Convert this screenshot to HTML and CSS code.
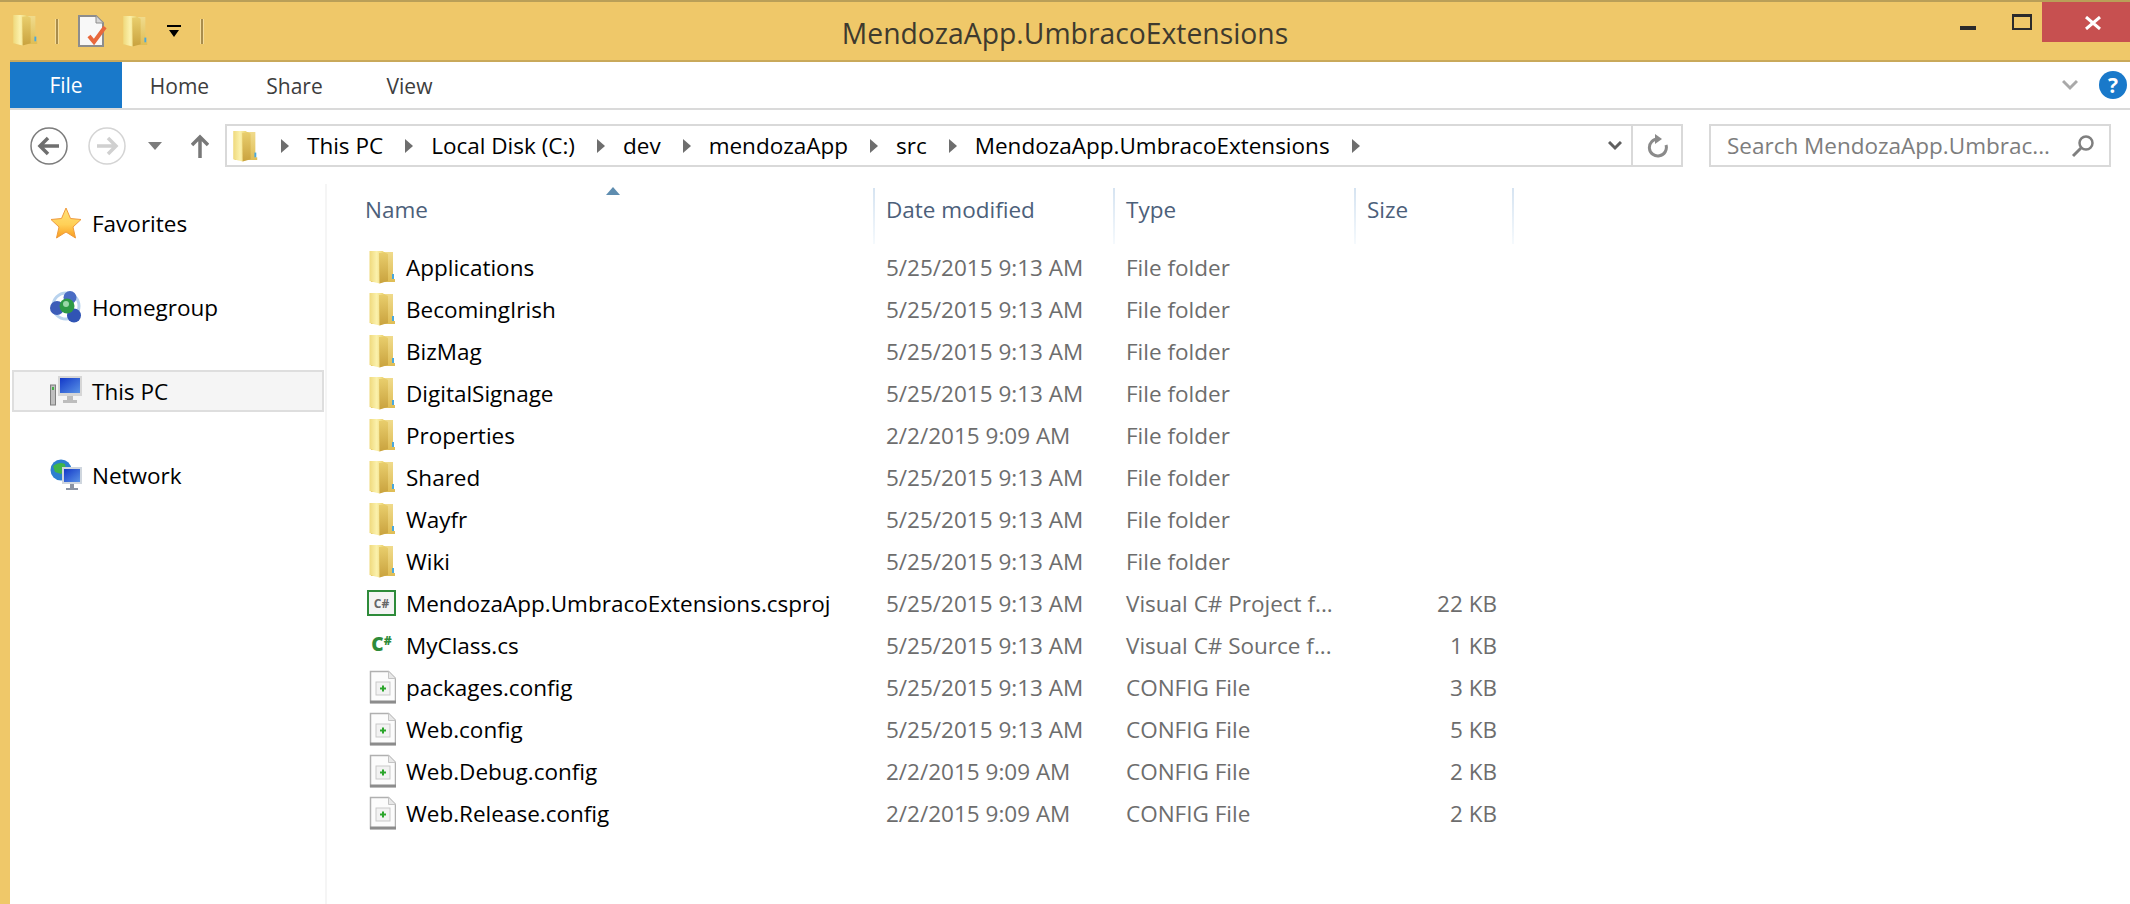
FILE: index.html
```html
<!DOCTYPE html>
<html>
<head>
  <meta charset="utf-8">
  <title>MendozaApp.UmbracoExtensions</title>
  <link rel="stylesheet" href="styles.css">
</head>
<body>
  <svg class="defs" width="0" height="0">
    <defs>
      <linearGradient id="leafLight" x1="0" y1="0" x2="1" y2="0">
        <stop offset="0" stop-color="#efd97c"/>
        <stop offset="0.45" stop-color="#fbf1ac"/>
        <stop offset="1" stop-color="#e6c85c"/>
      </linearGradient>
      <linearGradient id="leafBack" x1="0" y1="0" x2="0" y2="1">
        <stop offset="0" stop-color="#f0db8c"/>
        <stop offset="1" stop-color="#dfbd55"/>
      </linearGradient>
      <linearGradient id="leafFront" x1="0" y1="0" x2="0" y2="1">
        <stop offset="0" stop-color="#e8cd6c"/>
        <stop offset="1" stop-color="#c9a23e"/>
      </linearGradient>
      <linearGradient id="starFill" x1="0" y1="0" x2="0" y2="1">
        <stop offset="0" stop-color="#ffe27a"/>
        <stop offset="0.55" stop-color="#ffd057"/>
        <stop offset="1" stop-color="#f99b1e"/>
      </linearGradient>
      <linearGradient id="screenFill" x1="0" y1="0" x2="1" y2="1">
        <stop offset="0" stop-color="#1238c8"/>
        <stop offset="1" stop-color="#5a93e6"/>
      </linearGradient>
      <symbol id="folder" viewBox="0 0 26 34">
        <path d="M2 2h22v27h2v3H2z" fill="url(#leafBack)"/>
        <path d="M0.500 1h13l3 2v28l-6 2.500-10-2.500z" fill="url(#leafLight)"/>
        <path d="M10 3h7l2 1v27l-8.500 2.500z" fill="url(#leafFront)"/>
        <rect x="23" y="24" width="2" height="5" fill="#4aa8dc"/>
      </symbol>
      <symbol id="config" viewBox="0 0 28 34">
        <path d="M2.500 1.500h18l7 7v24h-25z" fill="#fcfcfc" stroke="#b0b0b0" stroke-width="1.500"/>
        <path d="M2 30.500h26v3H2z" fill="#8c8c8c"/>
        <path d="M20.500 1.500v7h7" fill="#e8e8e8" stroke="#c4c4c4"/>
        <rect x="8" y="12" width="14" height="13" fill="#f2f2f2" stroke="#c9c9c9"/>
        <path d="M15 15.500v6M12 18.500h6" stroke="#2aa52a" stroke-width="2"/>
      </symbol>
    </defs>
  </svg>

  <header class="titlebar">
    <div class="qat">
      <svg class="qat-folder" width="26" height="32"><use href="#folder"/></svg>
      <span class="qat-sep"></span>
      <svg class="qat-note" width="30" height="32" viewBox="0 0 30 32">
        <path d="M1 1h17l7 7v23H1z" fill="#f8f8f8" stroke="#8d8d8d" stroke-width="2"/>
        <path d="M18 1v7h7" fill="#d6d6d6" stroke="#8d8d8d"/>
        <path d="M11 21l5 6 11-15" fill="none" stroke="#e8683c" stroke-width="4"/>
      </svg>
      <svg class="qat-folder2" width="26" height="32"><use href="#folder"/></svg>
      <svg class="qat-drop" width="14" height="14" viewBox="0 0 14 14">
        <path d="M0 1h14v2H0zM2 6h10l-5 7z" fill="#000"/>
      </svg>
      <span class="qat-sep qat-sep-last"></span>
    </div>
    <div class="title">MendozaApp.UmbracoExtensions</div>
    <div class="winbtns">
      <span class="win-min"></span>
      <span class="win-max"></span>
      <span class="win-close">
        <svg width="16" height="14" viewBox="0 0 16 14"><path d="M1 1l14 12M15 1L1 13" stroke="#fff" stroke-width="3"/></svg>
      </span>
    </div>
  </header>

  <div class="window">
    <nav class="ribbon">
      <a class="tab tab-file">File</a>
      <a class="tab">Home</a>
      <a class="tab">Share</a>
      <a class="tab">View</a>
      <span class="ribbon-end">
        <svg width="16" height="12" viewBox="0 0 16 12"><path d="M1 2l7 7 7-7" fill="none" stroke="#a9a9a9" stroke-width="3"/></svg>
        <span class="help">?</span>
      </span>
    </nav>

    <div class="navrow">
      <svg class="nav-back" width="38" height="38" viewBox="0 0 38 38">
        <circle cx="19" cy="19" r="18" fill="none" stroke="#7c7c7c" stroke-width="1.500"/>
        <path d="M29 19H11M18 11l-8 8 8 8" fill="none" stroke="#6f6f6f" stroke-width="3.500"/>
      </svg>
      <svg class="nav-fwd" width="38" height="38" viewBox="0 0 38 38">
        <circle cx="19" cy="19" r="18" fill="none" stroke="#d4d4d4" stroke-width="1.500"/>
        <path d="M9 19h18M20 11l8 8-8 8" fill="none" stroke="#d0d0d0" stroke-width="3.500"/>
      </svg>
      <svg class="nav-drop" width="14" height="8" viewBox="0 0 14 8"><path d="M0 0h14L7 8z" fill="#7c7c7c"/></svg>
      <svg class="nav-up" width="18" height="24" viewBox="0 0 18 24"><path d="M9 24V3M1 11l8-8 8 8" fill="none" stroke="#787878" stroke-width="3.500"/></svg>

      <div class="address">
        <svg class="addr-folder" width="26" height="32"><use href="#folder"/></svg>
        <div class="crumbs">
          <span class="arrow"></span><span class="crumb">This PC</span>
          <span class="arrow"></span><span class="crumb">Local Disk (C:)</span>
          <span class="arrow"></span><span class="crumb">dev</span>
          <span class="arrow"></span><span class="crumb">mendozaApp</span>
          <span class="arrow"></span><span class="crumb">src</span>
          <span class="arrow"></span><span class="crumb">MendozaApp.UmbracoExtensions</span>
          <span class="arrow"></span>
        </div>
        <div class="addr-end">
          <span class="addr-chevron">
            <svg width="14" height="10" viewBox="0 0 14 10"><path d="M1 1l6 6 6-6" fill="none" stroke="#5f5f5f" stroke-width="3"/></svg>
          </span>
          <span class="addr-refresh">
            <svg width="22" height="24" viewBox="0 0 22 24">
              <path d="M12 5a8.500 8.500 0 1 0 8 6" fill="none" stroke="#8a8a8a" stroke-width="3"/>
              <path d="M9 0l7 5-7 5z" fill="#8a8a8a"/>
            </svg>
          </span>
        </div>
      </div>

      <div class="search">
        <span class="search-text">Search MendozaApp.Umbrac...</span>
        <svg width="24" height="24" viewBox="0 0 24 24">
          <circle cx="15" cy="9" r="6.500" fill="none" stroke="#7f7f7f" stroke-width="2.500"/>
          <path d="M10 14l-8 8" stroke="#7f7f7f" stroke-width="3"/>
        </svg>
      </div>
    </div>

    <div class="content">
      <aside class="sidebar">
        <div class="side-item">
          <svg width="32" height="32" viewBox="0 0 32 32">
            <path d="M16 1l4.500 10.500L31 12.500l-8 7.500 2.500 11L16 25l-9.500 6L9 20l-8-7.500 10.500-1z" fill="url(#starFill)" stroke="#ef9a3c"/>
          </svg>
          <span>Favorites</span>
        </div>
        <div class="side-item">
          <svg width="32" height="32" viewBox="0 0 32 32">
            <circle cx="16" cy="15" r="13" fill="none" stroke="#b9d3ee" stroke-width="3"/>
            <circle cx="20" cy="6.500" r="6.500" fill="#4a6cc4"/>
            <circle cx="7" cy="17" r="7" fill="#3c5cb8"/>
            <circle cx="24" cy="24.500" r="7" fill="#3054b4"/>
            <circle cx="17" cy="15" r="7.500" fill="#2e9a46"/>
            <circle cx="16" cy="13" r="3" fill="#9ad8a8"/>
          </svg>
          <span>Homegroup</span>
        </div>
        <div class="side-item side-item-active">
          <svg width="32" height="32" viewBox="0 0 32 32">
            <rect x="0.500" y="10" width="5" height="20" fill="#bfbfbf" stroke="#7f7f7f"/>
            <rect x="2" y="12" width="2" height="3" fill="#46b04a"/>
            <rect x="8" y="1" width="24" height="20" fill="#d6d6d6"/>
            <rect x="10" y="3" width="20" height="15" fill="url(#screenFill)"/>
            <path d="M17 21h6v4h4v3H13v-3h4z" fill="#bdbdbd"/>
          </svg>
          <span>This PC</span>
        </div>
        <div class="side-item">
          <svg width="32" height="32" viewBox="0 0 32 32">
            <circle cx="11" cy="11" r="10.500" fill="#2d7fd0"/>
            <path d="M3 7c4-3 8-4 12-2l1 6-5 4-6-2zM14 16l5 1v4h-5z" fill="#3fb54a"/>
            <rect x="12" y="8" width="20" height="17" fill="#cfd6de"/>
            <rect x="14" y="10" width="16" height="13" fill="url(#screenFill)"/>
            <path d="M20 25h4v4h4v2H16v-2h4z" fill="#8b94a3"/>
          </svg>
          <span>Network</span>
        </div>
      </aside>

      <main class="files">
        <div class="row head">
          <div class="cell-name">Name<span class="sort"></span></div>
          <div class="cell">Date modified</div>
          <div class="cell">Type</div>
          <div class="cell cell-size">Size</div>
        </div>

        <div class="row"><div class="name"><svg width="28" height="34"><use href="#folder"/></svg>Applications</div><div class="meta">5/25/2015 9:13 AM</div><div class="meta">File folder</div><div class="meta size"></div></div>
        <div class="row"><div class="name"><svg width="28" height="34"><use href="#folder"/></svg>BecomingIrish</div><div class="meta">5/25/2015 9:13 AM</div><div class="meta">File folder</div><div class="meta size"></div></div>
        <div class="row"><div class="name"><svg width="28" height="34"><use href="#folder"/></svg>BizMag</div><div class="meta">5/25/2015 9:13 AM</div><div class="meta">File folder</div><div class="meta size"></div></div>
        <div class="row"><div class="name"><svg width="28" height="34"><use href="#folder"/></svg>DigitalSignage</div><div class="meta">5/25/2015 9:13 AM</div><div class="meta">File folder</div><div class="meta size"></div></div>
        <div class="row"><div class="name"><svg width="28" height="34"><use href="#folder"/></svg>Properties</div><div class="meta">2/2/2015 9:09 AM</div><div class="meta">File folder</div><div class="meta size"></div></div>
        <div class="row"><div class="name"><svg width="28" height="34"><use href="#folder"/></svg>Shared</div><div class="meta">5/25/2015 9:13 AM</div><div class="meta">File folder</div><div class="meta size"></div></div>
        <div class="row"><div class="name"><svg width="28" height="34"><use href="#folder"/></svg>Wayfr</div><div class="meta">5/25/2015 9:13 AM</div><div class="meta">File folder</div><div class="meta size"></div></div>
        <div class="row"><div class="name"><svg width="28" height="34"><use href="#folder"/></svg>Wiki</div><div class="meta">5/25/2015 9:13 AM</div><div class="meta">File folder</div><div class="meta size"></div></div>
        <div class="row"><div class="name"><span class="icon-csproj">C#</span>MendozaApp.UmbracoExtensions.csproj</div><div class="meta">5/25/2015 9:13 AM</div><div class="meta">Visual C# Project f...</div><div class="meta size">22 KB</div></div>
        <div class="row"><div class="name"><span class="icon-cs">C<span class="icon-cs-sharp">#</span></span>MyClass.cs</div><div class="meta">5/25/2015 9:13 AM</div><div class="meta">Visual C# Source f...</div><div class="meta size">1 KB</div></div>
        <div class="row"><div class="name"><svg width="28" height="34"><use href="#config"/></svg>packages.config</div><div class="meta">5/25/2015 9:13 AM</div><div class="meta">CONFIG File</div><div class="meta size">3 KB</div></div>
        <div class="row"><div class="name"><svg width="28" height="34"><use href="#config"/></svg>Web.config</div><div class="meta">5/25/2015 9:13 AM</div><div class="meta">CONFIG File</div><div class="meta size">5 KB</div></div>
        <div class="row"><div class="name"><svg width="28" height="34"><use href="#config"/></svg>Web.Debug.config</div><div class="meta">2/2/2015 9:09 AM</div><div class="meta">CONFIG File</div><div class="meta size">2 KB</div></div>
        <div class="row"><div class="name"><svg width="28" height="34"><use href="#config"/></svg>Web.Release.config</div><div class="meta">2/2/2015 9:09 AM</div><div class="meta">CONFIG File</div><div class="meta size">2 KB</div></div>
      </main>
    </div>
  </div>
</body>
</html>
```

FILE: styles.css
```css
html, body {
  margin: 0;
  height: 100%;
}

body {
  font-family: "Open Sans", "Noto Sans", sans-serif;
  font-size: 22.5px;
  color: #000;
  background: #efc869;
  overflow: hidden;
}

svg {
  display: block;
  flex: none;
}

.defs {
  position: absolute;
}

/* title bar */
.titlebar {
  display: grid;
  grid-template-columns: 1fr auto 1fr;
  height: 58px;
  border-top: 2px solid #b99f58;
}

.qat {
  display: flex;
  align-items: center;
  padding-left: 12px;
}

.qat-folder {
  margin-top: -3px;
}

.qat-sep {
  width: 2px;
  height: 25px;
  margin-left: 18px;
  background: #a88c4c;
  box-shadow: 1px 0 0 #f6dc98, -1px 0 0 #f6dc98;
}

.qat-note {
  margin-left: 20px;
}

.qat-folder2 {
  margin-left: 14px;
}

.qat-drop {
  margin-left: 19px;
}

.qat-sep-last {
  margin-left: 20px;
}

.title {
  height: 58px;
  font-size: 28.3px;
  line-height: 62px;
  color: #3e3a2e;
}

.winbtns {
  display: flex;
  justify-content: flex-end;
  align-items: flex-start;
}

.win-min {
  width: 16px;
  height: 4px;
  margin-top: 24px;
  background: #2b2b2b;
}

.win-max {
  width: 16px;
  height: 11px;
  margin: 12px 10px 0 36px;
  border: 2px solid #2b2b2b;
  border-top-width: 3px;
}

.win-close {
  display: flex;
  align-items: center;
  justify-content: center;
  box-sizing: border-box;
  width: 88px;
  height: 40px;
  padding: 2px 0 0 14px;
  background: #c75050;
}

/* window body */
.window {
  display: flex;
  flex-direction: column;
  height: 844px;
  margin-left: 10px;
  background: #fff;
  border-top: 2px solid #c9a95a;
}

.ribbon {
  display: flex;
  align-items: stretch;
  flex: none;
  height: 46px;
  border-bottom: 2px solid #dadada;
}

.tab {
  display: flex;
  align-items: center;
  justify-content: center;
  width: 115px;
  padding-top: 2px;
  font-size: 21px;
  color: #3d3d3d;
}

.tab-file {
  width: 112px;
  padding-top: 0;
  background: #1979ca;
  color: #fff;
}

.ribbon-end {
  display: flex;
  align-items: center;
  gap: 21px;
  margin-left: auto;
  padding-right: 3px;
}

.help {
  display: flex;
  align-items: center;
  justify-content: center;
  width: 28px;
  height: 28px;
  border-radius: 50%;
  background: #1979ca;
  color: #fff;
  font-size: 21px;
  font-weight: 700;
}

/* back / forward / address */
.navrow {
  display: flex;
  align-items: center;
  flex: none;
  height: 43px;
  padding: 14px 19px 3px 20px;
}

.nav-fwd {
  margin-left: 20px;
}

.nav-drop {
  margin-left: 22px;
}

.nav-up {
  margin-left: 29px;
}

.address {
  display: flex;
  align-items: center;
  flex: 1;
  height: 39px;
  margin-left: 16px;
  padding-left: 5px;
  border: 2px solid #d9d9d9;
}

.crumbs {
  display: flex;
  align-items: center;
  flex: 1;
  margin-left: 23px;
  white-space: nowrap;
}

.arrow {
  width: 0;
  height: 0;
  margin-right: 18px;
  border-left: 8px solid #6e6e6e;
  border-top: 7px solid transparent;
  border-bottom: 7px solid transparent;
}

.crumb {
  margin-right: 22px;
}

.addr-end {
  display: flex;
  align-self: stretch;
}

.addr-chevron {
  display: flex;
  align-items: center;
  justify-content: center;
  width: 32px;
  border-right: 2px solid #d9d9d9;
}

.addr-refresh {
  display: flex;
  align-items: center;
  justify-content: center;
  width: 48px;
}

.search {
  display: flex;
  align-items: center;
  justify-content: space-between;
  box-sizing: border-box;
  width: 402px;
  height: 43px;
  margin-left: 26px;
  padding: 0 14px 0 16px;
  border: 2px solid #d9d9d9;
  color: #7d7d7d;
}

/* left pane */
.content {
  display: flex;
  flex: 1;
}

.sidebar {
  flex: none;
  box-sizing: border-box;
  width: 317px;
  margin-top: 14px;
  padding: 18px 1px 0 2px;
  border-right: 2px solid #f5f5f5;
}

.side-item {
  display: flex;
  align-items: center;
  gap: 10px;
  box-sizing: border-box;
  height: 42px;
  margin-bottom: 42px;
  padding-left: 38px;
}

.side-item-active {
  padding-left: 36px;
  background: #f5f5f5;
  border: 2px solid #dedede;
}

/* file list */
.files {
  flex: 1;
  padding: 18px 0 0 39px;
}

.row {
  display: grid;
  grid-template-columns: 507px 240px 241px 160px;
  height: 42px;
  align-items: center;
}

.head {
  height: 56px;
  margin-bottom: 2px;
  align-items: stretch;
  color: #4c607a;
}

.cell-name {
  position: relative;
  display: flex;
  align-items: center;
  margin-left: -1px;
  padding-bottom: 14px;
}

.sort {
  position: absolute;
  top: -1px;
  left: 241px;
  width: 0;
  height: 0;
  border-left: 7px solid transparent;
  border-right: 7px solid transparent;
  border-bottom: 8px solid #5f8db0;
}

.cell {
  display: flex;
  align-items: center;
  padding: 0 0 14px 11px;
  border-left: 2px solid #dde8f3;
  border-image: linear-gradient(#d5e3f1, #f6fafd) 1;
}

.cell-size {
  border-right: 2px solid #dde8f3;
}

.name {
  display: flex;
  align-items: center;
  gap: 10px;
  white-space: nowrap;
}

.name svg {
  margin-left: 2px;
}

.meta {
  padding-left: 13px;
  color: #6d6d6d;
  white-space: nowrap;
}

.size {
  padding-right: 17px;
  text-align: right;
}

.icon-csproj {
  display: flex;
  align-items: center;
  justify-content: center;
  box-sizing: border-box;
  width: 29px;
  height: 26px;
  margin-left: 1px;
  border: 2px solid #2e8b3a;
  background: #f4f4f4;
  color: #666;
  font-size: 12px;
  font-weight: 700;
}

.icon-cs {
  display: flex;
  align-items: flex-start;
  justify-content: center;
  width: 29px;
  height: 26px;
  margin-left: 1px;
  color: #2e8b3a;
  font-size: 19px;
  line-height: 24px;
  font-weight: 800;
}

.icon-cs-sharp {
  font-size: 12px;
  line-height: 18px;
}
```
